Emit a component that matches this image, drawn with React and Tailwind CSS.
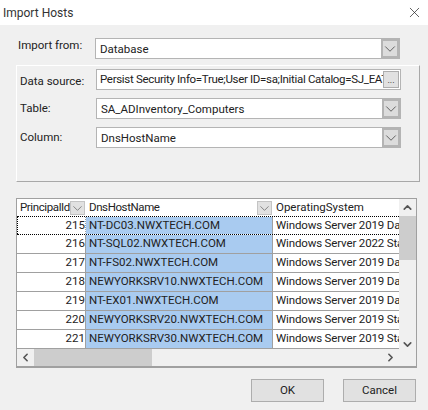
import React from "react";
import { X, ChevronDown, ChevronUp, ChevronLeft, ChevronRight } from "lucide-react";

const hosts = [
  [215, "NT-DC03.NWXTECH.COM", "Windows Server 2019 Datacenter"],
  [216, "NT-SQL02.NWXTECH.COM", "Windows Server 2022 Standard"],
  [217, "NT-FS02.NWXTECH.COM", "Windows Server 2019 Datacenter"],
  [218, "NEWYORKSRV10.NWXTECH.COM", "Windows Server 2019 Datacenter"],
  [219, "NT-EX01.NWXTECH.COM", "Windows Server 2019 Datacenter"],
  [220, "NEWYORKSRV20.NWXTECH.COM", "Windows Server 2019 Standard"],
  [221, "NEWYORKSRV30.NWXTECH.COM", "Windows Server 2019 Standard"],
];

const Combo = ({ value, className }) => (
  <div className={`flex h-[21px] border border-[#b4b4b4] bg-white ${className}`}>
    <span className="flex-1 pl-[4px] leading-[20px] overflow-hidden whitespace-nowrap">{value}</span>
    <span className="flex w-[18px] items-center justify-center bg-[#dcdcdc] border-2 border-[#b4b4b4]">
      <ChevronDown size={18} strokeWidth={1.2} className="shrink-0 text-[#555]" />
    </span>
  </div>
);

const HeaderButton = () => (
  <span className="flex h-[14px] w-[15px] shrink-0 items-end justify-center overflow-hidden bg-[#e1e1e1] border border-[#c4c4c4]">
    <ChevronDown size={15} strokeWidth={1.2} className="-mb-[2px] shrink-0 text-[#666]" />
  </span>
);

const HeaderCell = ({ label, className }) => (
  <div className={`flex items-center pl-[3px] pr-[1px] ${className}`}>
    <span className="flex-1 whitespace-nowrap tracking-[-0.4px]">{label}</span>
    <HeaderButton />
  </div>
);

const App = () => {
  return (
    <div className="w-[428px] h-[410px] overflow-hidden bg-[#f0f0f0] text-[11.5px] text-[#222] font-['Roboto','Liberation_Sans',sans-serif]">
      <div className="flex h-[25px] items-center justify-between bg-white pl-[3px] pr-[5px] text-[12px] text-[#333]">
        <span>Import Hosts</span>
        <X size={17} strokeWidth={1} className="text-[#222]" />
      </div>

      <div className="flex h-[21px] mt-[13px] items-center pl-[18px]">
        <span className="w-[77px] -mt-[5px]">Import from:</span>
        <Combo value="Database" className="w-[305px]" />
      </div>

      <div className="mt-[6px] ml-[16px] h-[117px] w-[404px] border border-white border-r-[#a8a8a8] border-b-[#a8a8a8] pl-[3px] pt-[3px]">
        <div className="flex items-center h-[21px]">
          <span className="w-[76px] mt-[5px]">Data source:</span>
          <div className="flex h-[21px] w-[305px] items-center border border-[#b4b4b4] bg-white pl-[3px]">
            <span className="min-w-0 flex-1 overflow-hidden whitespace-nowrap tracking-[-0.32px]">Persist Security Info=True;User ID=sa;Initial Catalog=SJ_EAT</span>
            <span className="flex h-[17px] w-[16px] shrink-0 mr-[1px] items-center justify-center bg-[#e1e1e1] border border-[#adadad] text-[9px] leading-[8px]">...</span>
          </div>
        </div>
        <div className="flex items-center h-[21px] mt-[8px]">
          <span className="w-[76px] mt-[1px]">Table:</span>
          <Combo value="SA_ADInventory_Computers" className="w-[305px]" />
        </div>
        <div className="flex items-center h-[21px] mt-[8px]">
          <span className="w-[76px] mt-[1px]">Column:</span>
          <Combo value="DnsHostName" className="w-[305px]" />
        </div>
      </div>

      <div className="mt-[16px] ml-[16px] h-[170px] w-[401px] border border-[#a0a0a0] border-b-2 bg-white flex">
        <div className="w-[382px] flex flex-col">
          <div className="flex h-[17px] shrink-0">
            <HeaderCell label="PrincipalId" className="w-[69px]" />
            <HeaderCell label="DnsHostName" className="w-[187px]" />
            <div className="min-w-0 flex-1 pl-[3px] whitespace-nowrap overflow-hidden">OperatingSystem</div>
          </div>
          {hosts.map(([id, name, os], i) => (
            <div key={id} className={`flex h-[19px] shrink-0 border-b border-[#a0a0a0] leading-[17px] ${i === 0 ? "border-t border-dotted border-t-black border-b-black" : ""}`}>
              <div className={`w-[69px] shrink-0 border-r border-[#a0a0a0] text-right ${i === 0 ? "border-l border-dotted border-l-black" : ""}`}>{id}</div>
              <div className="w-[187px] shrink-0 border-r border-[#a0a0a0] bg-[#a9cbf0] pl-[3px] whitespace-nowrap overflow-hidden">{name}</div>
              <div className="min-w-0 flex-1 pl-[3px] whitespace-nowrap overflow-hidden tracking-[-0.15px]">{os}</div>
            </div>
          ))}
          <div className="flex flex-1 items-center bg-[#f0f0f0]">
            <ChevronLeft size={13} strokeWidth={3} className="ml-[2px] text-[#555]" />
            <div className="ml-[2px] h-full w-[118px] bg-[#cdcdcd]" />
            <ChevronRight size={13} strokeWidth={3} className="ml-auto mr-[2px] text-[#555]" />
          </div>
        </div>
        <div className="flex w-[17px] flex-col items-center bg-[#f0f0f0]">
          <ChevronUp size={13} strokeWidth={3} className="mt-[2px] text-[#555]" />
          <div className="mt-[2px] h-[44px] w-full bg-[#cdcdcd]" />
          <ChevronDown size={13} strokeWidth={3} className="mt-[78px] text-[#555]" />
        </div>
      </div>

      <div className="mt-[11px] flex justify-end gap-[19px] pr-[12px]">
        <button className="h-[23px] w-[73px] bg-[#e1e1e1] border border-[#adadad]">OK</button>
        <button className="h-[23px] w-[73px] bg-[#e1e1e1] border border-[#adadad]">Cancel</button>
      </div>
    </div>
  );
};

export default App;
